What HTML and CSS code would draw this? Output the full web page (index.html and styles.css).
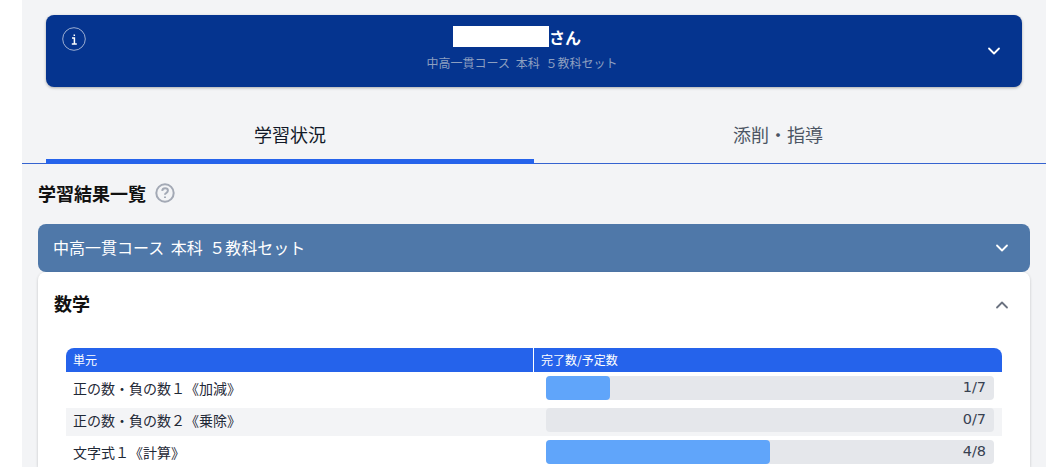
FILE: index.html
```html
<!DOCTYPE html>
<html lang="ja">
<head>
<meta charset="utf-8">
<title>学習状況</title>
<link rel="stylesheet" href="styles.css">
</head>
<body>
<main class="main">
  <section class="student">
    <svg class="info" viewBox="0 0 24 24" aria-hidden="true"><circle cx="12" cy="12" r="11.3"/><path class="info-i" d="M10 10.9h2.4v5.8M9.8 17h5M12.3 7.4v1.7"/></svg>
    <div class="student-text">
      <div class="student-name"><span class="mask"></span>さん</div>
      <div class="student-course">中高一貫コース 本科 &#xFF15;教科セット</div>
    </div>
    <svg class="chev chev-student" viewBox="0 0 16 16" aria-hidden="true"><path d="M3 5.5l5 5 5-5"/></svg>
  </section>
  <nav class="tabs">
    <div class="tab tab-active">学習状況</div>
    <div class="tab">添削・指導</div>
  </nav>
  <section class="content">
    <h2 class="title">学習結果一覧
      <svg class="help" viewBox="0 0 20 20" aria-hidden="true"><circle cx="10" cy="10" r="8.7"/><path d="M7.2 7.8c.2-1.6 1.4-2.5 2.9-2.5 1.6 0 2.8 1 2.8 2.3 0 1.1-.7 1.7-1.5 2.2-.9.5-1.4 1-1.4 2"/><path class="help-dot" d="M10 13.4v1.6"/></svg>
    </h2>
    <div class="course-bar">
      <span class="course-name">中高一貫コース 本科 &#xFF15;教科セット</span>
      <svg class="chev chev-course" viewBox="0 0 16 16" aria-hidden="true"><path d="M3 5.5l5 5 5-5"/></svg>
    </div>
    <div class="card">
      <div class="subject">
        <h3 class="subject-name">数学</h3>
        <svg class="chev chev-subject" viewBox="0 0 16 16" aria-hidden="true"><path d="M3 10.5l5-5 5 5"/></svg>
      </div>
      <div class="table">
        <div class="thead">
          <div class="th th-unit">単元</div>
          <div class="th">完了数/予定数</div>
        </div>
        <div class="row row-odd">
          <div class="unit">正の数・負の数&#xFF11;《加減》</div>
          <div class="progress"><div class="fill" style="width:14.3%"></div><span class="count">1/7</span></div>
        </div>
        <div class="row row-even">
          <div class="unit">正の数・負の数&#xFF12;《乗除》</div>
          <div class="progress"><span class="count">0/7</span></div>
        </div>
        <div class="row row-odd">
          <div class="unit">文字式&#xFF11;《計算》</div>
          <div class="progress"><div class="fill" style="width:50%"></div><span class="count">4/8</span></div>
        </div>
      </div>
    </div>
  </section>
</main>
</body>
</html>
```
FILE: styles.css
```css
* { box-sizing: border-box; }
html, body { height: 100%; overflow: hidden; }
body {
  margin: 0;
  padding-left: 22px;
  background: #fff;
  color: #111827;
  font-family: "Noto Sans CJK JP", "Noto Sans", sans-serif;
}
.main {
  width: 1024px;
  height: 100%;
  padding-top: 15px;
  background: #f3f4f6;
  overflow: hidden;
}
.student {
  display: flex;
  height: 72px;
  margin: 0 24px;
  padding: 0 20px 0 16px;
  border-radius: 8px;
  background: #05348f;
  box-shadow: 0 1px 3px rgba(0, 0, 0, .3);
  color: #fff;
}
.info { width: 24px; height: 24px; margin-top: 12px; flex: none; }
.info circle { fill: none; stroke: #c3cde2; stroke-width: .8; }
.info-i { fill: none; stroke: #fff; stroke-width: 1.5; }
.student-text { flex: 1; padding: 8px 28px 0 0; text-align: center; }
.student-name {
  display: flex;
  justify-content: center;
  align-items: center;
  height: 28px;
  padding-right: 10px;
  font-size: 16px;
  font-weight: 700;
}
.mask { width: 96px; height: 21px; margin-top: -1px; background: #fff; }
.student-course { margin-top: 2px; font-size: 12px; line-height: 20px; word-spacing: 3px; color: #8d9fc0; }
.chev { fill: none; stroke-linecap: round; stroke-linejoin: round; flex: none; }
.chev path { stroke-width: 1.8; }
.chev-student { width: 16px; height: 16px; margin-top: 28px; }
.chev-student path, .chev-course path { stroke: #fff; }
.tabs {
  display: grid;
  grid-template-columns: 1fr 1fr;
  height: 77px;
  padding: 0 24px;
  border-bottom: 1px solid #3563d0;
}
.tab {
  padding-top: 33px;
  height: 77px;
  font-size: 18px;
  line-height: 28px;
  text-align: center;
  color: #4b5563;
}
.tab-active { color: #111827; border-bottom: 5px solid #2563eb; }
.content { padding: 15px 16px 0; }
.title {
  display: flex;
  align-items: center;
  gap: 9px;
  height: 28px;
  margin: 0 0 17px;
  font-size: 18px;
  font-weight: 700;
  color: #111;
}
.help { width: 20px; height: 20px; margin-top: 0; }
.help circle, .help path { fill: none; stroke: #a3a9b5; stroke-width: 2; }
.course-bar {
  display: flex;
  justify-content: space-between;
  align-items: center;
  height: 48px;
  padding: 0 20px 0 15px;
  border-radius: 8px;
  background: #4f78a9;
  color: #fff;
  font-size: 16px;
}
.course-name { margin-top: -3px; word-spacing: 3px; }
.chev-course { width: 16px; height: 16px; }
.card {
  height: 195px;
  padding: 0 28px;
  border-radius: 8px 8px 0 0;
  background: #fff;
  box-shadow: 0 1px 3px rgba(0, 0, 0, .2);
}
.subject {
  display: flex;
  justify-content: space-between;
  align-items: center;
  height: 76px;
  margin: 0 -8px 0 -12px;
}
.subject-name { margin: -14px 0 0; font-size: 18px; font-weight: 700; color: #111; line-height: 28px; }
.chev-subject { width: 16px; height: 16px; margin-top: -10px; }
.chev-subject path { stroke: #6b7280; }
.table { font-size: 14px; }
.thead {
  display: grid;
  grid-template-columns: 468px 1fr;
  height: 24px;
  border-radius: 8px 8px 0 0;
  background: #2563eb;
  color: #fff;
  font-size: 12px;
  line-height: 24px;
}
.th { padding-left: 7px; }
.th-unit { border-right: 1px solid #fff; }
.row { display: grid; grid-template-columns: 468px 1fr; }
.row-odd { padding: 4px 0 8px; }
.row-even { padding: 0 0 4px; background: #f3f4f6; }
.unit { padding-left: 7px; line-height: 24px; color: #1f2937; }
.progress {
  position: relative;
  height: 24px;
  margin: 0 8px 0 12px;
  border-radius: 4px;
  background: #e5e7eb;
}
.fill { height: 100%; border-radius: 4px; background: #60a5fa; }
.count {
  position: absolute;
  top: -1px;
  right: 8px;
  font-family: "DejaVu Sans", sans-serif;
  font-size: 14.5px;
  line-height: 24px;
  color: #374151;
}
```
